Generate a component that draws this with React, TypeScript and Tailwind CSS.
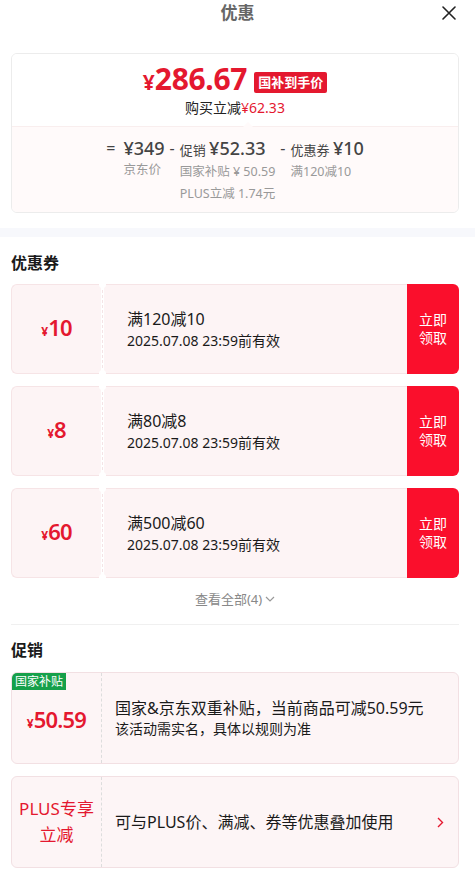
const FONT = "font-['Noto_Sans','Noto_Sans_CJK_SC',sans-serif]";

type Coupon = { amount: string; title: string; expire: string };

const COUPONS: Coupon[] = [
  { amount: "10", title: "满120减10", expire: "2025.07.08 23:59前有效" },
  { amount: "8", title: "满80减8", expire: "2025.07.08 23:59前有效" },
  { amount: "60", title: "满500减60", expire: "2025.07.08 23:59前有效" },
];

function CloseIcon() {
  return (
    <svg width="14" height="14" viewBox="0 0 14 14" fill="none" stroke="#222" strokeWidth={1.6} strokeLinecap="round">
      <path d="M1 1l12 12M13 1L1 13" />
    </svg>
  );
}

function CouponCard({ amount, title, expire }: Coupon) {
  return (
    <div className="relative flex h-[90px]">
      {/* left amount */}
      <div className="flex w-[90px] items-center justify-center rounded-l-md border border-r-0 border-[#f6e4e6] bg-[#fdf4f5]">
        <span className="leading-[30px] text-[#e4182f]">
          <span className="text-[12px] font-bold">¥</span>
          <span className="text-[22px] font-semibold tracking-[-0.8px]">{amount}</span>
        </span>
      </div>
      {/* perforation */}
      <div className="flex w-[3px] justify-center border-y border-[#f6e4e6] bg-white">
        <div className="h-full border-l border-dashed border-[#f4e4e6]" />
      </div>
      {/* notch dots */}
      <span className="absolute left-[88px] top-[-3px] h-[7px] w-[7px] rounded-full bg-white" />
      <span className="absolute bottom-[-3px] left-[88px] h-[7px] w-[7px] rounded-full bg-white" />
      {/* text */}
      <div className="flex flex-1 flex-col justify-center border-y border-[#f6e4e6] bg-[#fdf4f5] pl-[23px]">
        <div className="text-[16px] leading-[22px] text-[#1a1a1a]">{title}</div>
        <div className="mt-[1px] text-[14px] leading-[20px] text-[#1a1a1a]">{expire}</div>
      </div>
      {/* action */}
      <div className="flex w-[52px] flex-col items-center justify-center rounded-r-md bg-[#fa0f2c] text-[14px] leading-[18px] text-white">
        <span>立即</span>
        <span>领取</span>
      </div>
    </div>
  );
}

export default function App() {
  return (
    <div className={`${FONT} min-h-[879px] w-[475px] bg-white`}>
      {/* header */}
      <div className="relative flex h-[25px] items-center justify-center">
        <span className="text-[17px] font-bold text-[#666]">优惠</span>
        <span className="absolute right-[19px] top-[6px]">
          <CloseIcon />
        </span>
      </div>

      <div className="pl-[11px] pr-[16px]">
        {/* price card */}
        <div className="mt-[28px] overflow-hidden rounded-md border border-[#ececec]">
          <div className="relative flex h-[72px] flex-col items-center bg-white pt-[10px]">
            <div className="flex h-[34px] items-center">
              <span className="leading-[34px] text-[#e4182f]">
                <span className="text-[21px] font-bold">¥</span>
                <span className="text-[30px] font-bold tracking-[-0.3px]">286.67</span>
              </span>
              <span className="ml-[7px] mt-[2px] rounded-[2px] bg-[#e4182f] px-[4px] text-[13px] font-bold leading-[21px] text-white">
                国补到手价
              </span>
            </div>
            <div className="mt-[1px] text-[14px] leading-[18px] text-[#222]">
              购买立减<span className="text-[#e4182f]">¥62.33</span>
            </div>
            <span className="absolute bottom-[-1px] left-[231px] h-0 w-0 border-x-[5px] border-b-[5px] border-x-transparent border-b-[#fffafa]" />
          </div>
          <div className="flex h-[86px] justify-center border-t border-[#f9eeee] bg-[#fffafa] pt-[10px] text-[#444]">
            <span className="mr-[8px] text-[16px] leading-[22px]">=</span>
            <div className="flex flex-col">
              <span className="text-[18px] font-medium leading-[22px]">¥349</span>
              <span className="mt-[2px] text-[12.5px] leading-[18px] text-[#999]">京东价</span>
            </div>
            <span className="mx-[5px] text-[16px] leading-[22px]">-</span>
            <div className="flex flex-col">
              <span className="leading-[22px]">
                <span className="text-[13px]">促销 </span>
                <span className="text-[18px] font-medium">¥52.33</span>
              </span>
              <span className="mt-[2px] text-[12.5px] leading-[18px] text-[#999]">国家补贴 ¥ 50.59</span>
              <span className="mt-[4px] text-[12.5px] leading-[18px] text-[#999]">PLUS立减 1.74元</span>
            </div>
            <span className="mx-[5px] text-[16px] leading-[22px]">-</span>
            <div className="flex flex-col">
              <span className="leading-[22px]">
                <span className="text-[13px]">优惠券 </span>
                <span className="text-[18px] font-medium">¥10</span>
              </span>
              <span className="mt-[2px] text-[12.5px] leading-[18px] text-[#999]">满120减10</span>
            </div>
          </div>
        </div>
      </div>

      <div className="mt-[15px] h-[9px] bg-[#f7f8fc]" />

      <div className="pl-[11px] pr-[16px]">
        <h2 className="mt-[15px] text-[16px] font-bold leading-[22px] text-[#1a1a1a]">优惠券</h2>
        <div className="mt-[10px] flex flex-col gap-[12px]">
          {COUPONS.map((c) => (
            <CouponCard key={c.amount} {...c} />
          ))}
        </div>

        <div className="mt-[12px] flex items-center justify-center text-[13px] leading-[18px] text-[#888]">
          查看全部(4)
          <svg className="ml-[3px]" width="10" height="6" viewBox="0 0 10 6" fill="none" stroke="#999" strokeWidth={1.2}>
            <path d="M1 1l4 4 4-4" />
          </svg>
        </div>

        <div className="mt-[16px] border-t border-[#f0f0f0]" />

        <h2 className="mt-[14px] text-[16px] font-bold leading-[22px] text-[#1a1a1a]">促销</h2>

        {/* 国家补贴 */}
        <div className="relative mt-[11px] flex h-[92px] overflow-hidden rounded-md border border-[#f2e0e3] bg-[#fdf5f6]">
          <span className="absolute left-0 top-0 bg-[#16a04a] px-[3px] text-[12px] leading-[17px] text-white">国家补贴</span>
          <div className="flex w-[90px] items-center justify-center border-r border-dashed border-[#ddd] pt-[6px]">
            <span className="leading-[30px] text-[#e4182f]">
              <span className="text-[12px] font-bold">¥</span>
              <span className="text-[22px] font-semibold tracking-[-0.8px]">50.59</span>
            </span>
          </div>
          <div className="flex flex-1 flex-col justify-center pl-[13px]">
            <div className="text-[16px] leading-[21px] text-[#1a1a1a]">国家&amp;京东双重补贴，当前商品可减50.59元</div>
            <div className="text-[14px] leading-[20px] text-[#1a1a1a]">该活动需实名，具体以规则为准</div>
          </div>
        </div>

        {/* PLUS */}
        <div className="mt-[12px] flex h-[92px] overflow-hidden rounded-md border border-[#f2e0e3] bg-[#fdf5f6]">
          <div className="flex w-[90px] flex-col items-center justify-center border-r border-dashed border-[#ddd] text-[17px] leading-[26px] text-[#e4182f]">
            <span>PLUS专享</span>
            <span>立减</span>
          </div>
          <div className="flex flex-1 items-center pl-[13px] pr-[14px]">
            <span className="flex-1 text-[16px] text-[#1a1a1a]">可与PLUS价、满减、券等优惠叠加使用</span>
            <svg width="7" height="11" viewBox="0 0 7 11" fill="none" stroke="#e4182f" strokeWidth={1.4}>
              <path d="M1 1l4.5 4.5L1 10" />
            </svg>
          </div>
        </div>
      </div>
    </div>
  );
}
